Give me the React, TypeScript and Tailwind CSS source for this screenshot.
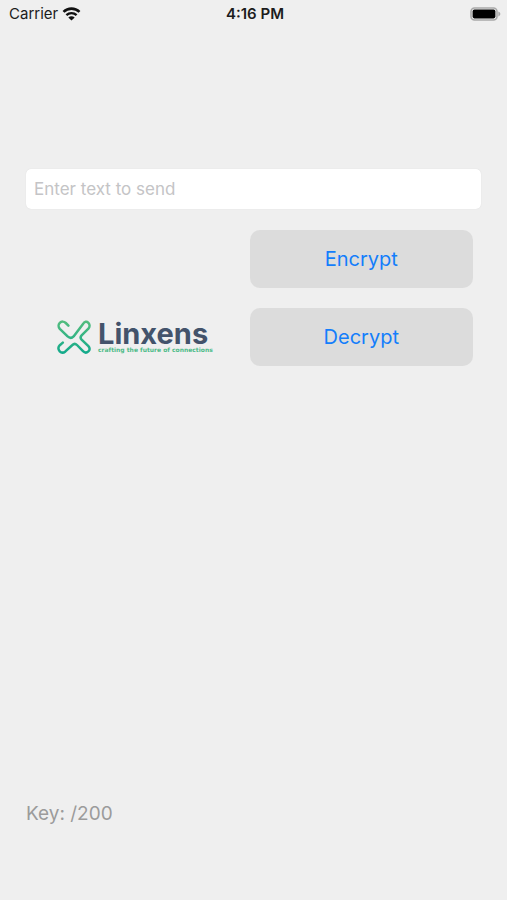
import React from 'react';

const WifiIcon: React.FC = () => (
  <svg width="19" height="14" viewBox="0 0 18 14" fill="none" aria-hidden="true">
    <path d="M1 4.9C5.5 0.5 12.5 0.5 17 4.9" stroke="#111" strokeWidth="2.6" />
    <path d="M3.9 8.1C6.8 5.4 11.2 5.4 14.1 8.1" stroke="#111" strokeWidth="2.4" />
    <path d="M9 13.6L5.8 10.4C7.7 8.7 10.3 8.7 12.2 10.4Z" fill="#111" />
  </svg>
);

const BatteryIcon: React.FC = () => (
  <svg width="31" height="14" viewBox="0 0 31 14" fill="none" aria-hidden="true">
    <rect x="1" y="1" width="26" height="12" rx="3.5" stroke="#a9a9a9" strokeWidth="1.6" />
    <rect x="2.6" y="2.6" width="22.8" height="8.8" rx="1.8" fill="#000" />
    <path d="M28.3 4.6C31 5.4 31 8.6 28.3 9.4Z" fill="#a9a9a9" />
  </svg>
);

const LinxensMark: React.FC = () => (
  <svg width="34" height="34" viewBox="0 0 34 34" fill="none" aria-hidden="true">
    <defs>
      <linearGradient id="mark" x1="0" y1="0" x2="0" y2="34" gradientUnits="userSpaceOnUse">
        <stop offset="0" stopColor="#55bd7d" />
        <stop offset="1" stopColor="#12aa8c" />
      </linearGradient>
    </defs>
    <path
      d="M11.4 5.6L8.8 3C7 1.2 4.4 1.2 2.8 2.8C1.2 4.4 1.2 7 2.8 8.8L10.6 16.4C12.6 18.2 14.8 18.2 16.6 16.4L26 4C27.4 1.4 29.8 1.2 31.4 2.8C33 4.5 32.8 7 31.4 8.6L24.6 15.4C23.2 16.9 23.2 18.1 24.6 19.6L31.4 26.2C33 28 33 30 31.4 31.4C29.8 32.8 27.6 32.8 26 31.2L20 25C18.4 23.4 17 23.4 15.4 25L8.4 31.4C6.6 32.8 4.2 32.8 2.7 31.3C0.8 29.4 1.1 26.8 2.8 25.2L5.8 22.6"
      stroke="url(#mark)"
      strokeWidth="2.5"
      strokeLinecap="round"
      strokeLinejoin="round"
    />
  </svg>
);

const StatusBar: React.FC = () => (
  <header className="grid grid-cols-3 items-center h-7 pl-[9px] pr-1.5 text-[15px] text-[#1c1c1c]">
    <div className="flex items-center gap-1">
      <span>Carrier</span>
      <WifiIcon />
    </div>
    <span className="text-center font-semibold">4:16 PM</span>
    <div className="flex justify-end">
      <BatteryIcon />
    </div>
  </header>
);

const Logo: React.FC = () => (
  <div className="flex items-center gap-[7px]">
    <LinxensMark />
    <div className="flex flex-col whitespace-nowrap">
      <span className="text-[29px] leading-[26px] font-bold text-[#43536b]">Linxens</span>
      <span className="font-['DejaVu_Sans',sans-serif] text-[6px] leading-[6px] font-bold text-[#4dbb88]">
        crafting the future of connections
      </span>
    </div>
  </div>
);

interface ActionButtonProps {
  label: string;
}

const ActionButton: React.FC<ActionButtonProps> = ({ label }) => (
  <button type="button" className="w-full h-[58px] rounded-[10px] bg-[#dcdcdc] text-xl text-[#147efb]">
    {label}
  </button>
);

export default function App() {
  return (
    <div className="flex flex-col min-h-screen bg-[#efefef] font-[Inter,'Liberation_Sans',sans-serif]">
      <StatusBar />

      <main className="flex flex-col grow px-[26px] pt-[141px] pb-[71px]">
        <input
          type="text"
          aria-label="Enter text to send"
          placeholder="Enter text to send"
          className="w-full h-10 px-2 rounded-[5px] bg-white text-[17px] text-black placeholder:text-[#c4c4c6] shadow-[0_0_1px_#d0d0d0] outline-none"
        />

        <div className="grid grid-cols-2 items-end mt-[21px] pr-2">
          <div className="flex pl-[31px] pb-3">
            <Logo />
          </div>
          <div className="flex flex-col gap-5">
            <ActionButton label="Encrypt" />
            <ActionButton label="Decrypt" />
          </div>
        </div>

        <p className="mt-auto text-[19px] leading-[30px] text-[#9b9b9b]">Key: /200</p>
      </main>
    </div>
  );
}
